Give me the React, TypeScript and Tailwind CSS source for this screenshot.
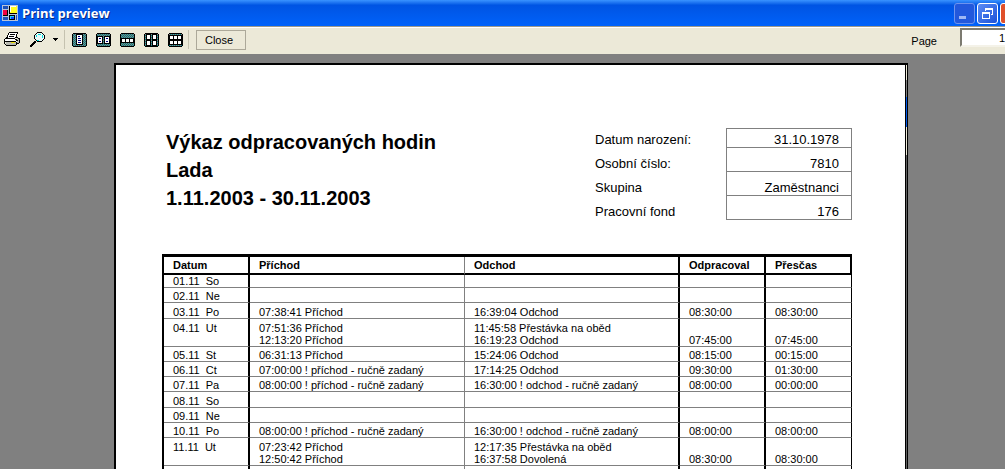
import { Fragment } from "react";
import { clsx } from "clsx";

interface DayRow {
  date: string;
  day: string;
  arrivals: string[];
  departures: string[];
  worked?: string;
  overtime?: string;
  height: string;
}

const days: DayRow[] = [
  { date: "01.11", day: "So", arrivals: [], departures: [], height: "h-[13px]" },
  { date: "02.11", day: "Ne", arrivals: [], departures: [], height: "h-[15px]" },
  { date: "03.11", day: "Po", arrivals: ["07:38:41 Příchod"], departures: ["16:39:04 Odchod"], worked: "08:30:00", overtime: "08:30:00", height: "h-4" },
  { date: "04.11", day: "Ut", arrivals: ["07:51:36 Příchod", "12:13:20 Příchod"], departures: ["11:45:58 Přestávka na oběd", "16:19:23 Odchod"], worked: "07:45:00", overtime: "07:45:00", height: "h-7" },
  { date: "05.11", day: "St", arrivals: ["06:31:13 Příchod"], departures: ["15:24:06 Odchod"], worked: "08:15:00", overtime: "00:15:00", height: "h-[15px]" },
  { date: "06.11", day: "Ct", arrivals: ["07:00:00 ! příchod - ručně zadaný"], departures: ["17:14:25 Odchod"], worked: "09:30:00", overtime: "01:30:00", height: "h-[15px]" },
  { date: "07.11", day: "Pa", arrivals: ["08:00:00 ! příchod - ručně zadaný"], departures: ["16:30:00 ! odchod - ručně zadaný"], worked: "08:00:00", overtime: "00:00:00", height: "h-[15px]" },
  { date: "08.11", day: "So", arrivals: [], departures: [], height: "h-4" },
  { date: "09.11", day: "Ne", arrivals: [], departures: [], height: "h-[15px]" },
  { date: "10.11", day: "Po", arrivals: ["08:00:00 ! příchod - ručně zadaný"], departures: ["16:30:00 ! odchod - ručně zadaný"], worked: "08:00:00", overtime: "08:00:00", height: "h-[15px]" },
  { date: "11.11", day: "Ut", arrivals: ["07:23:42 Příchod", "12:50:42 Příchod"], departures: ["12:17:35 Přestávka na oběd", "16:37:58 Dovolená"], worked: "08:30:00", overtime: "08:30:00", height: "h-7" },
  { date: "", day: "", arrivals: [], departures: [], height: "h-4" },
];

const employee = [
  { label: "Datum narození:", value: "31.10.1978" },
  { label: "Osobní číslo:", value: "7810" },
  { label: "Skupina", value: "Zaměstnanci" },
  { label: "Pracovní fond", value: "176" },
];

// little sheets inside each layout icon: x, y, width, height
const layouts = [
  { label: "One page", sheets: [[4, 1, 7, 11]] },
  { label: "Two pages", sheets: [[1, 3, 6, 8], [8, 3, 6, 8]] },
  { label: "Three pages", sheets: [[1, 5, 5, 5], [5, 5, 5, 5], [9, 5, 5, 5]] },
  { label: "Four pages", sheets: [[2, 1, 5, 6], [8, 1, 5, 6], [2, 7, 5, 6], [8, 7, 5, 6]] },
  { label: "Six pages", sheets: [[1, 2, 5, 5], [5, 2, 5, 5], [9, 2, 5, 5], [1, 7, 5, 5], [5, 7, 5, 5], [9, 7, 5, 5]] },
];

function AppIcon() {
  return (
    <svg width="16" height="16" viewBox="0 0 16 16" shapeRendering="crispEdges" aria-hidden="true">
      <path fill="#b8c4d8" d="M0 0h16v16H0z" />
      <path fill="#1c50b8" d="M1 1h5v3H1zM1 12h5v3H1zM14 10h1v5h-1z" />
      <path fill="#000" d="M7 1h8v8H7zM1 5h5v6H1zM7 10h6v5H7z" />
      <path fill="#ffff20" d="M8 1h7v7H8z" />
      <path fill="#fff" d="M8 1h6v1H9v5H8z" />
      <path fill="#f00040" d="M1 5h4v5H1z" />
      <path fill="#20d8ff" d="M8 11h4v3H8z" />
      <path fill="#0848ff" d="M9 12h3v2H9z" />
    </svg>
  );
}

function PrinterIcon() {
  return (
    <svg width="16" height="15" viewBox="0 0 16 15" shapeRendering="crispEdges" aria-hidden="true">
      <path fill="#fff" d="M5 1h8l-2 5H4zM1 7h12v6H2z" />
      <path fill="#b8b8b0" d="M13 6h2v5h-2zM2 10h10v3H2z" />
      <path fill="#000" d="M5 0h9v1H5zM4 1h1v2H4zM13 1h1v1h-1zM12 2h1v3h-1zM3 3h1v2H3zM6 2h5v1H6zM5 4h5v1H5zM2 5h2v1H2zM11 5h3v1h-3zM1 6h10v1H1zM14 6h1v1h-1zM0 7h1v5H0zM11 7h2v1h-2zM15 6h1v5h-1zM1 9h11v1H1zM12 8h2v1h-2zM12 10h1v3h-1zM1 12h1v1H1zM2 13h10v1H2zM13 11h2v1h-2z" />
      <path fill="#f0e000" d="M7 10h4v1H7z" />
    </svg>
  );
}

function MagnifierIcon() {
  return (
    <svg width="16" height="15" viewBox="0 0 16 15" shapeRendering="crispEdges" aria-hidden="true">
      <path fill="#e8f8f8" d="M7 1h5l2 2v4l-2 2H7L5 7V3z" />
      <path fill="#00e0e0" d="M8 2h3v1H8zM12 3h1v3h-1zM7 8h2v1H7zM6 3h1v2H6z" />
      <path fill="#000" d="M7 0h5v1H7zM6 1h1v1H6zM12 1h1v1h-1zM5 2h1v1H5zM13 2h1v1h-1zM4 3h1v4H4zM14 3h1v4h-1zM5 7h1v1H5zM13 7h1v1h-1zM6 8h1v1H6zM12 8h1v1h-1zM7 9h5v1H7zM4 9h2v1H4zM3 10h3v1H3zM2 11h3v1H2zM1 12h3v1H1zM0 13h3v1H0zM0 14h2v1H0z" />
    </svg>
  );
}

function LayoutIcon({ index }: { index: number }) {
  const patternId = `dither-${index}`;
  return (
    <svg width="15" height="14" viewBox="0 0 15 14" shapeRendering="crispEdges" aria-hidden="true">
      <defs>
        <pattern id={patternId} width="2" height="2" patternUnits="userSpaceOnUse">
          <path fill="#008080" d="M0 0h2v2H0z" />
          <path fill="#848284" d="M0 0h1v1H0zM1 1h1v1H1z" />
        </pattern>
      </defs>
      <path fill="#000" d="M1 0h13v1h1v12h-1v1H1v-1H0V1h1z" />
      <path fill={`url(#${patternId})`} d="M1 1h13v12H1z" />
      {layouts[index].sheets.map(([x, y, w, h]) => (
        <Fragment key={`${x}-${y}`}>
          <rect x={x} y={y} width={w} height={h} fill="#000" />
          <rect x={x + 1} y={y + 1} width={w - 2} height={h - 2} fill="#fff" />
          {index === 0 && <path fill="#000080" d="M6 3h2v1H6zM6 5h3v1H6zM6 7h3v1H6zM6 9h3v1H6z" />}
          {index === 1 && <path fill="#000080" d={`M${x + 2} 5h2v1h-2zM${x + 2} 8h2v1h-2z`} />}
        </Fragment>
      ))}
    </svg>
  );
}

function TitleBar() {
  return (
    <header className="flex h-[26px] shrink-0 items-center overflow-hidden bg-linear-to-b from-[#3a93ff] via-[#0054e3] via-20% to-[#0062fa] pl-0.5">
      <AppIcon />
      <h1 className="ml-1 flex-1 font-['Open_Sans',sans-serif] text-[13px] leading-4 font-bold text-white [text-shadow:1px_1px_#0a2a80]">
        Print preview
      </h1>
      <div className="-mr-4 flex shrink-0 gap-0.5">
        <button type="button" aria-label="Minimize" className="flex size-[21px] items-end rounded-[3px] border border-[#6d93ee] bg-[#2258dc] p-1">
          <span className="h-[3px] w-[7px] bg-[#a0b8f4]" />
        </button>
        <button type="button" aria-label="Restore" className="flex size-[21px] items-center justify-center rounded-[3px] border border-white bg-linear-to-br from-[#5c8cf4] to-[#1c50d8]">
          <svg width="11" height="11" viewBox="0 0 11 11" fill="#fff" shapeRendering="crispEdges" aria-hidden="true">
            <path d="M3 0h8v7H9V6h1V2H4v1H3zM0 4h8v7H0zM1 6v4h6V6z" fillRule="evenodd" />
          </svg>
        </button>
        <button type="button" aria-label="Close window" className="size-[21px] rounded-[3px] border border-white bg-[#e0502a]" />
      </div>
    </header>
  );
}

function Toolbar() {
  return (
    <div className="flex h-7 shrink-0 items-center border-t border-[#9c9a8c] bg-[#ece9d8] pb-0.5 text-[11px] leading-4 shadow-[inset_0_1px_#fff]">
      <button type="button" aria-label="Print" className="ml-1">
        <PrinterIcon />
      </button>
      <button type="button" aria-label="Zoom" className="ml-2.5 flex items-center gap-[7px]">
        <MagnifierIcon />
        <svg width="5" height="3" viewBox="0 0 5 3" shapeRendering="crispEdges" aria-hidden="true">
          <path d="M0 0h5v1H4v1H3v1H2V2H1V1H0z" />
        </svg>
      </button>
      <span className="mr-[7px] ml-1.5 h-[19px] w-px bg-[#c5c2b0]" />
      <div className="flex gap-[9px]">
        {layouts.map((layout, index) => (
          <button key={layout.label} type="button" aria-label={layout.label}>
            <LayoutIcon index={index} />
          </button>
        ))}
      </div>
      <span className="mr-[7px] ml-[5px] h-[19px] w-px bg-[#c5c2b0]" />
      <button type="button" className="h-5 w-[50px] border border-[#aca899] pr-1">
        Close
      </button>
      <label htmlFor="page" className="mr-[23px] ml-auto pt-0.5">
        Page
      </label>
      <input
        id="page"
        type="text"
        defaultValue="1"
        className="mt-px -mr-0.5 h-[19px] w-[47px] self-start border-2 border-[#f4f2e8] border-t-[#7c7a70] border-l-[#7c7a70] bg-white text-right"
      />
    </div>
  );
}

function EmployeeInfo() {
  return (
    <table className="w-[257px] border-separate border-spacing-0 text-[13px] leading-4">
      <tbody>
        {employee.map(({ label, value }, index) => (
          <tr key={label} className={index === 0 ? "h-5" : "h-6"}>
            <th scope="row" className="p-0 text-left align-bottom font-normal">
              {label}
            </th>
            <td
              className={clsx(
                "w-[126px] border-x border-b border-[#808080] p-0 pr-3 text-right align-bottom leading-[14px]",
                index === 0 && "border-t"
              )}
            >
              {value}
            </td>
          </tr>
        ))}
      </tbody>
    </table>
  );
}

function Timesheet() {
  return (
    <table className="w-full table-fixed border-separate border-spacing-0 border-t-3 border-l-2 border-black text-[11px] leading-3 whitespace-nowrap">
      <colgroup>
        <col className="w-[86px]" />
        <col className="w-[215px]" />
        <col />
        <col className="w-[86px]" />
        <col className="w-[86px]" />
      </colgroup>
      <thead>
        <tr className="h-[18px] text-left">
          <th className="border-r-2 border-b-2 border-black p-0 pl-[9px]">Datum</th>
          <th className="border-r border-b-2 border-r-[#808080] border-b-black p-0 pl-[9px]">Příchod</th>
          <th className="border-r-2 border-b-2 border-black p-0 pl-[9px]">Odchod</th>
          <th className="border-r-2 border-b-2 border-black p-0 pl-[9px]">Odpracoval</th>
          <th className="border-r-2 border-b-2 border-black p-0 pl-[9px]">Přesčas</th>
        </tr>
      </thead>
      <tbody>
        {days.map((row) => (
          <tr key={row.date} className={row.height}>
            <td
              className={clsx(
                "border-r-2 border-b border-r-black border-b-[#808080] p-0 pl-[9px]",
                row.arrivals.length > 1 ? "pt-[3px] align-top" : "align-bottom"
              )}
            >
              <span className="flex gap-1.5">
                <span>{row.date}</span>
                <span>{row.day}</span>
              </span>
            </td>
            <td className="border-r border-b border-[#808080] p-0 pl-[9px] align-bottom">
              {row.arrivals.map((entry) => (
                <div key={entry}>{entry}</div>
              ))}
            </td>
            <td className="border-r-2 border-b border-r-black border-b-[#808080] p-0 pl-[9px] align-bottom">
              {row.departures.map((entry) => (
                <div key={entry}>{entry}</div>
              ))}
            </td>
            <td className="border-r-2 border-b border-r-black border-b-[#808080] p-0 pl-[9px] align-bottom">{row.worked}</td>
            <td className="border-r border-b border-r-black border-b-[#808080] p-0 pl-[9px] align-bottom">{row.overtime}</td>
          </tr>
        ))}
      </tbody>
    </table>
  );
}

export default function App() {
  return (
    <div className="flex h-screen flex-col overflow-hidden bg-[#808080] font-['Liberation_Sans',Arial,sans-serif] text-black">
      <TitleBar />
      <Toolbar />
      <main className="min-h-0 flex-1 overflow-hidden pt-[9px] pr-[97px] pl-[114px]">
        <div className="flex min-h-full border-t-2 border-r border-l-2 border-black">
          <article className="min-w-0 flex-1 bg-white pt-[63px] pr-[53px] pl-[46px]">
            <div className="flex items-start justify-between">
              <h2 className="pl-1 text-xl leading-7 font-bold">
                Výkaz odpracovaných hodin
                <br />
                Lada
                <br />
                1.11.2003 - 30.11.2003
              </h2>
              <EmployeeInfo />
            </div>
            <div className="pt-[34px]">
              <Timesheet />
            </div>
          </article>
          <div className="flex w-0.5 flex-col border-l border-black">
            <span className="h-[15px] bg-[#ece9d8]" />
            <span className="h-[17px] bg-[#808080]" />
            <span className="h-[30px] bg-[#0058e8]" />
            <span className="h-7 bg-[#ece9d8]" />
            <span className="flex-1 bg-[#606060]" />
          </div>
        </div>
      </main>
    </div>
  );
}
